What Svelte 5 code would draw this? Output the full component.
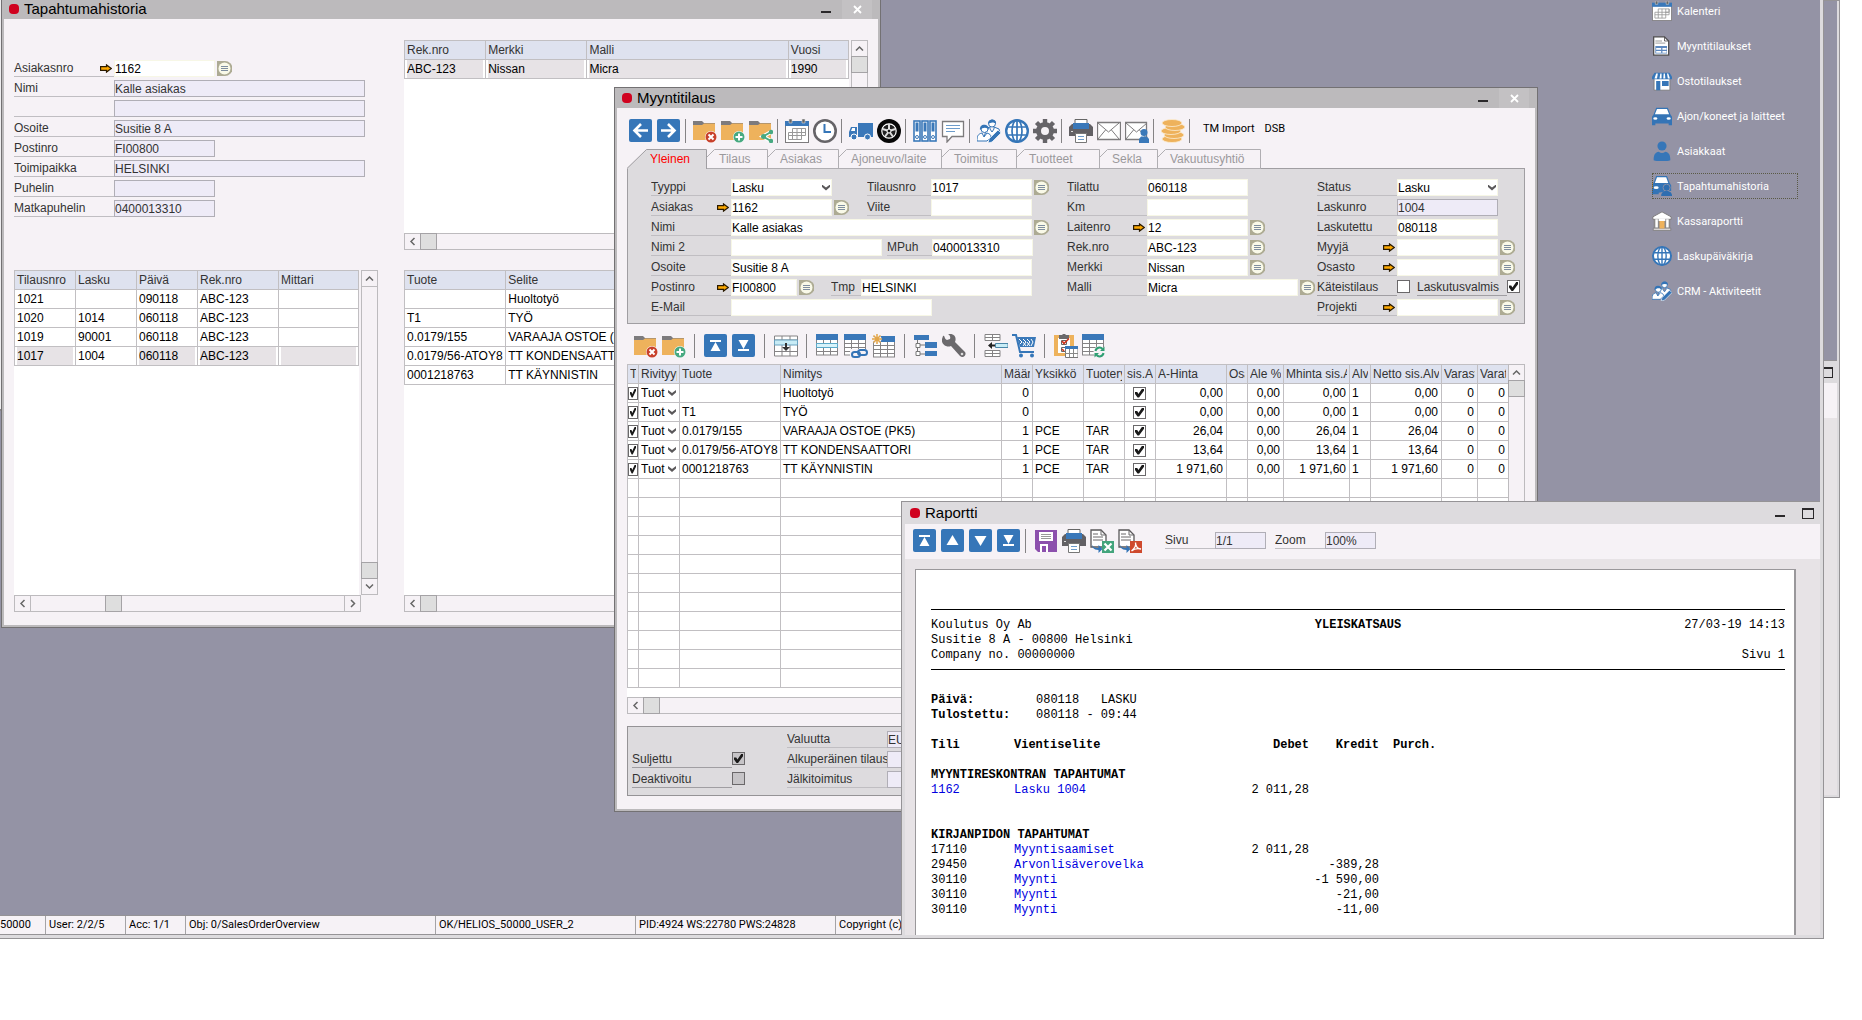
<script>
  const nav = [
    ['calendar', 'Kalenteri'],
    ['invoice', 'Myyntitilaukset'],
    ['shop', 'Ostotilaukset'],
    ['car', 'Ajon/koneet ja laitteet'],
    ['person', 'Asiakkaat'],
    ['carPerson', 'Tapahtumahistoria'],
    ['bank', 'Kassaraportti'],
    ['globe', 'Laskupäiväkirja'],
    ['crm', 'CRM - Aktiviteetit']
  ];

  const orderTools = [
    'left', 'right', '|', 'folderDel', 'folderAdd', 'folderShare', '|', 'calendar', 'clock', '|',
    'truck', 'wheel', '|', 'binders', 'chat', '|', 'crm', 'globe', 'gear', '|',
    'printer', 'mail', 'mailUser', '|', 'coins', '|'
  ];
  const rowTools = [
    'folderDel', 'folderAdd', '|', 'top', 'bottom', '|', 'insertRow', '|', 'grid', 'gridLink', 'gridNew', '|',
    'tree', 'wrench', '|', 'outdent', 'cart', '|', 'clipboard', 'gridSync'
  ];
  const reportTools = ['top', 'up', 'down', 'bottom', '|', 'save', 'printer', 'xls', 'pdf'];

  const tabs = [
    ['Tilaus', 61], ['Asiakas', 71], ['Ajoneuvo/laite', 103], ['Toimitus', 75],
    ['Tuotteet', 83], ['Sekla', 58], ['Vakuutusyhtiö', 103]
  ];

  const orders = [
    ['1021', '', '090118', 'ABC-123', ''],
    ['1020', '1014', '060118', 'ABC-123', ''],
    ['1019', '90001', '060118', 'ABC-123', ''],
    ['1017', '1004', '060118', 'ABC-123', '']
  ];
  const products = [
    ['', 'Huoltotyö'],
    ['T1', 'TYÖ'],
    ['0.0179/155', 'VARAAJA OSTOE (PK5)'],
    ['0.0179/56-ATOY8', 'TT KONDENSAATTORI'],
    ['0001218763', 'TT KÄYNNISTIN']
  ];

  const lineCols = [
    ['T', 11], ['Rivityyp', 41], ['Tuote', 101], ['Nimitys', 221], ['Määr', 31], ['Yksikkö', 51],
    ['Tuotery', 41], ['sis.A', 31], ['A-Hinta', 71], ['Osa', 21], ['Ale %', 36], ['Mhinta sis.A', 66],
    ['Alv', 21], ['Netto sis.Alv', 71], ['Varast', 36], ['Varat', 31]
  ];
  const lines = [
    ['', 'Huoltotyö', '0', '', '', '0,00'],
    ['T1', 'TYÖ', '0', '', '', '0,00'],
    ['0.0179/155', 'VARAAJA OSTOE (PK5)', '1', 'PCE', 'TAR', '26,04'],
    ['0.0179/56-ATOY8', 'TT KONDENSAATTORI', '1', 'PCE', 'TAR', '13,64'],
    ['0001218763', 'TT KÄYNNISTIN', '1', 'PCE', 'TAR', '1 971,60']
  ];

  const ledger = [
    ['17110', 'Myyntisaamiset', '2 011,28', ''],
    ['29450', 'Arvonlisäverovelka', '', '-389,28'],
    ['30110', 'Myynti', '', '-1 590,00'],
    ['30110', 'Myynti', '', '-21,00'],
    ['30110', 'Myynti', '', '-11,00']
  ];

  const status = [
    ['50000', 46], ['User: 2/2/5', 80], ['Acc: 1/1', 60], ['Obj: 0/SalesOrderOverview', 250],
    ['OK/HELIOS_50000_USER_2', 200], ['PID:4924 WS:22780 PWS:24828', 200], ['Copyright (c)', 200]
  ];
</script>

{#snippet folder()}
  <path d="M0 2h9l2 2h11v5H0z" fill="#7d7b7d" /><path d="M0 6h9l2-1.500h11V21H0z" fill="#eeb25c" />
{/snippet}

{#snippet gridLines(w)}
  <rect x=".5" y="1" width={w} height="20" fill="#fff" stroke="#858385" />
  <path d="M0 9.500h{w}M0 13.500h{w}M0 17.500h{w}M7.500 5v16M14.500 5v16" stroke="#858385" fill="none" />
  <rect width={w + 1} height="6" fill="#3a78b9" />
{/snippet}

{#snippet page()}
  <path d="M1 1h10l5 5v12H1z" fill="#fff" stroke="#5a585a" stroke-width="1.300" /><path d="M11 1v5h5M3 5h5M3 8h10M3 11h10" fill="none" stroke="#6a686a" />
  <path d="M1.500 13c0 5 3 6 7 6l0-3 4 4-4 4 0-3c-5 0-7-3-7-8z" fill="#3474b6" />
{/snippet}

{#snippet icon(name)}
  <svg viewBox="0 0 24 24" aria-hidden="true">
    {#if ['left', 'right', 'top', 'bottom', 'up', 'down'].includes(name)}
      <rect width="23" height="23" rx="2" fill="#3676b8" />
      {#if name === 'left'}<path d="M19 11.500H6M12 5l-6.500 6.500L12 18" fill="none" stroke="#fff" stroke-width="2.600" />
      {:else if name === 'right'}<path d="M4 11.500h13M11 5l6.500 6.500L11 18" fill="none" stroke="#fff" stroke-width="2.600" />
      {:else if name === 'top'}<path d="M6 6h11v2H6zM11.500 8l5 9h-10z" fill="#fff" />
      {:else if name === 'bottom'}<path d="M6 15h11v2H6zM11.500 15l-5-9h10z" fill="#fff" />
      {:else if name === 'up'}<path d="M11.500 6l6 10h-12z" fill="#fff" />
      {:else}<path d="M11.500 17l-6-10h12z" fill="#fff" />{/if}
    {:else if name === 'folderDel'}
      {@render folder()}<circle cx="18" cy="18" r="6" fill="#fff" /><circle cx="18" cy="18" r="5.500" fill="#c8402b" /><path d="M15.500 15.500l5 5m0-5l-5 5" stroke="#fff" stroke-width="2" />
    {:else if name === 'folderAdd'}
      {@render folder()}<circle cx="18" cy="18" r="6" fill="#fff" /><circle cx="18" cy="18" r="5.500" fill="#47a981" /><path d="M18 14.500v7M14.500 18h7" stroke="#fff" stroke-width="2" />
    {:else if name === 'folderShare'}
      {@render folder()}<path d="M22 13l-8 4.500 8 4.500" fill="none" stroke="#fff" stroke-width="4" /><path d="M22 13l-8 4.500 8 4.500" fill="none" stroke="#47a981" stroke-width="2" /><circle cx="22" cy="13" r="2.200" fill="#47a981" /><circle cx="14.500" cy="17.500" r="2.500" fill="#47a981" /><circle cx="22" cy="22" r="2.200" fill="#47a981" />
    {:else if name === 'calendar'}
      <rect x=".5" y="4" width="23" height="19.500" fill="#fff" stroke="#7d7b7d" /><path d="M0 2h24v5H0z" fill="#3a78b9" /><path d="M4 0h3v4H4zM17 0h3v4h-3z" fill="#666" stroke="#ddd" stroke-width=".6" />
      <path d="M7.500 9.500h13v4h-17v7h13v-11m4 0v7h-17m8.500-7v11m-4.500-11v11m8.500-7h4" fill="none" stroke="#999" />
    {:else if name === 'clock'}
      <circle cx="12" cy="12" r="10.700" fill="#fff" stroke="#666468" stroke-width="2.600" /><path d="M11.500 5v8H18" fill="none" stroke="#3676b8" stroke-width="2" />
    {:else if name === 'truck'}
      <path d="M9 4h15v14H9zM0 18v-5l2-5h6v10z" fill="#3a78b9" /><path d="M2 12l1.200-3H6v3z" fill="#fff" /><circle cx="5" cy="18" r="3" fill="#3a78b9" stroke="#fff" /><circle cx="18.500" cy="18" r="3" fill="#3a78b9" stroke="#fff" />
    {:else if name === 'wheel'}
      <circle cx="12" cy="12" r="12" fill="#070707" /><circle cx="12" cy="12" r="7.200" fill="#222" stroke="#fff" stroke-width="1.200" /><path d="M12 12V5M12 12l6.500-2M12 12l4 5.700M12 12l-4 5.700M12 12L5.500 10" stroke="#ddd" stroke-width="2" /><circle cx="12" cy="12" r="2" fill="#111" stroke="#fff" />
    {:else if name === 'binders'}
      {#each [1, 9, 17] as x}
        <rect {x} y="2" width="6" height="20" fill="#fff" stroke="#3a78b9" stroke-width="1.600" /><rect x={x + 1.500} y="3.500" width="3" height="9" fill="#3a78b9" /><circle cx={x + 3} cy="18" r="1.500" fill="none" stroke="#3a78b9" />
      {/each}
    {:else if name === 'chat'}
      <path d="M1.500 2.500h21v15H11l-5 5.500v-5.500H1.500z" fill="#fff" stroke="#7d7b7d" stroke-width="1.300" /><path d="M5 6.500h14M5 9.500h14M5 12.500h9" stroke="#6d9ccb" />
    {:else if name === 'crm'}
      <path d="M10 9l3-1v2l2 3 2-3v-2l5 2 1 4-8 8-8-4z" fill="#fff" stroke="#3474b6" /><circle cx="15" cy="4.500" r="3.500" fill="#fff" stroke="#3474b6" /><path d="M11 5c0-6 9-6 8 0-2-2-5-2-8 0z" fill="#3474b6" /><path d="M0 22c0-5 1-7 5-8l2 4 3-4c3 1 4 2 4 4l-4 4z" fill="#fff" stroke="#3474b6" /><circle cx="7.500" cy="10" r="3.500" fill="#fff" stroke="#3474b6" /><path d="M3 11c-1-7 9-7 9 0-2-3-6-3-9 0z" fill="#3474b6" /><path d="M21 11l3 3-9 9-4 1 1-4z" fill="#3474b6" stroke="#fff" stroke-width=".7" />
    {:else if name === 'globe'}
      <circle cx="12" cy="12" r="10.800" fill="#fff" stroke="#3676b8" stroke-width="2.400" /><ellipse cx="12" cy="12" rx="5" ry="11" fill="none" stroke="#3676b8" stroke-width="1.700" /><path d="M12 1v22M2 8h20M2 16h20" stroke="#3676b8" stroke-width="1.700" />
    {:else if name === 'gear'}
      <circle cx="12" cy="12" r="6.500" fill="none" stroke="#666468" stroke-width="5" /><path d="M12 0v5M12 19v5M0 12h5M19 12h5M3.500 3.500l4 4M16.500 16.500l4 4M3.500 20.500l4-4M16.500 7.500l4-4" stroke="#666468" stroke-width="4.400" />
    {:else if name === 'printer'}
      <path d="M0 8l3-3h18l3 3v9H0z" fill="#626064" /><path d="M6 .5h12V6H6z" fill="#fff" stroke="#666" /><path d="M4 4h16v6H4z" fill="#3a78b9" /><path d="M6.500 14.500h11v9h-11z" fill="#fff" stroke="#777" /><path d="M9 17.500h6M9 20.500h6" stroke="#6d9ccb" /><path d="M2 12h2v1H2z" fill="#ddd" />
    {:else if name === 'mail' || name === 'mailUser'}
      <path d={name === 'mail' ? 'M.5 3.500h23v17H.5z' : 'M.5 3.500h21v17H.5z'} fill="#fff" stroke="#7d7b7d" stroke-width="1.300" /><path d="M1 4l10.500 9L22 4M1 20l7.500-9M22 20l-7.500-9" fill="none" stroke="#7d7b7d" />
      {#if name === 'mailUser'}<circle cx="19" cy="13.500" r="3.500" fill="#3a78b9" /><path d="M14 24v-4l2-2.500h6l2 2.500v4z" fill="#3a78b9" />{/if}
    {:else if name === 'coins'}
      {#each [[11, 20], [13, 16], [10, 12], [14, 8], [11, 4]] as [x, y]}
        <ellipse cx={x} cy={y} rx="10" ry="3.500" fill="#eeb25c" stroke="#fbeed6" stroke-width=".8" />
      {/each}
    {:else if name === 'insertRow'}
      <path d="M.5 2h23v20H.5zM.5 6h23M.5 17.500h23M8 2v20M16 2v20" fill="#fff" stroke="#858385" /><path d="M.5 6h23v5H.5z" fill="#c8ecf6" stroke="#6aa2c0" /><path d="M11 9h2v4h3l-4 4-4-4h3z" fill="#333" />
    {:else if name === 'grid'}
      {@render gridLines(21)}<path d="M.5 9.500h21v4H.5z" fill="#d8f3fa" stroke="#5ba9c9" />
    {:else if name === 'gridLink'}
      {@render gridLines(21)}<path d="M6 15h18v9H6z" fill="#f6f2f6" /><rect x="8" y="18" width="8" height="5" rx="2.500" fill="none" stroke="#3474b6" stroke-width="2" /><rect x="14" y="16" width="9" height="5" rx="2.500" fill="none" stroke="#3474b6" stroke-width="2" />
    {:else if name === 'gridNew'}
      <g transform="translate(1 2)">{@render gridLines(21)}</g><circle cx="5" cy="5" r="4.500" fill="#f6f2f6" /><path d="M5 0v10M0 5h10M1.500 1.500l7 7m0-7l-7 7" stroke="#e2a548" stroke-width="1.500" />
    {:else if name === 'gridSync'}
      {@render gridLines(21)}<circle cx="17.500" cy="18" r="6" fill="#f6f2f6" /><path d="M13.500 17a4 4 0 0 1 7-2M21.500 19a4 4 0 0 1-7 2" fill="none" stroke="#2f9f73" stroke-width="2" /><path d="M22.500 12.500v4.500H18zM12.500 23.500V19H17z" fill="#2f9f73" />
    {:else if name === 'tree'}
      <path d="M0 1h15v5H0zM11 8h12v6H11zM11 17h12v5H11z" fill="#3a78b9" /><path d="M3.500 6v14H11M3.500 11H11" fill="none" stroke="#777" /><path d="M2 9.500h4v4H2zM2 17.500h4v4H2z" fill="#fff" stroke="#777" />
    {:else if name === 'wrench'}
      <path d="M1 2c2-1 1 3 4 4l3-1c1-3-1-4-2-5 6-1 9 3 7 8l10 10c2 3-2 7-5 4L9 12C4 14-1 10 0 5z" fill="#6b696c" /><circle cx="20" cy="20" r="1.300" fill="#ddd" />
    {:else if name === 'outdent'}
      <path d="M1 .5h15v6H1zM1 16.500h15v6H1zM1 3.500h15M1 19.500h15M8.500 0v6M8.500 16v6" fill="#fff" stroke="#858385" /><path d="M11.500 9.500H24v4H11.500z" fill="#c8ecf6" stroke="#4a86a8" /><path d="M4 11.500l4-3.500v2.500h3v2H8V15z" fill="#222" />
    {:else if name === 'cart'}
      <path d="M0 1h4l4 17h14" fill="none" stroke="#3676b8" stroke-width="2" /><path d="M5 3h19l-2 10H8z" fill="#3a78b9" /><path d="M7 5l3 3-2 2m3-5l3 3-3 4m0-4l3 4m1-7l3 3-3 4m0-4l3 4m1-7l2 3-2 4" fill="none" stroke="#fff" /><circle cx="9" cy="21.500" r="2" fill="#3676b8" /><circle cx="20" cy="21.500" r="2" fill="#3676b8" />
    {:else if name === 'clipboard'}
      <path d="M0 1h20v21H0z" fill="#eeb25c" /><path d="M4 4h12v15H4z" fill="#fff" /><path d="M5 1h3l2-2 2 2h3v4H5z" fill="#6b696c" /><path d="M7.500 6.500h5v4h-5zM7.500 13.500h5v4h-5z" fill="#fff" stroke="#666" /><path d="M8 7l2 2.500 5-5M8 15l2 2" fill="none" stroke="#d0361f" stroke-width="1.700" /><path d="M11.500 12.500H24v11H11.500z" fill="#fff" stroke="#777" /><path d="M11 12h13v3H11z" fill="#3a78b9" /><path d="M11 19.500h13M15.500 15v8M19.500 15v8" stroke="#888" />
    {:else if name === 'save'}
      <path d="M1 1h22v22H4l-3-3z" fill="#8c50ad" /><path d="M5 3h14v9H5z" fill="#fff" /><path d="M7 5.500h10M7 7.500h10M7 9.500h10" stroke="#999" /><path d="M6 15h12v8H6z" fill="#fff" /><path d="M8 17h4v6H8zM14 15h4v8h-4z" fill="#8c50ad" />
    {:else if name === 'xls'}
      {@render page()}<path d="M12 12h12v12H12z" fill="#43a47c" /><path d="M14.500 14.500l7 7m0-7l-7 7" stroke="#fff" stroke-width="2.200" />
    {:else if name === 'pdf'}
      {@render page()}<path d="M12 12h12v12H12z" fill="#cf4a2e" /><path d="M17.500 13.500c1 4-1 6-4 8.500 3-2.500 5-3 9.500-2-3 0-5-2-5.500-6" fill="none" stroke="#fff" stroke-width="1.300" />
    {:else if name === 'invoice'}
      <path d="M2 1h13l5 5v17H2z" fill="#fff" stroke="#4e4c4e" stroke-width="1.500" /><path d="M15 1v5h5" fill="none" stroke="#4e4c4e" /><path d="M4 6h8M4 8.500h12" stroke="#888" /><path d="M4 12h14v9H4z" fill="#5c88bf" /><path d="M5 14.500h6v2H5zM12.500 14.500h5v2h-5zM5 18h6v2H5zM12.500 18h5v2h-5z" fill="#fff" />
    {:else if name === 'shop'}
      <path d="M2.500 9h19v14h-19z" fill="#fff" stroke="#777" /><path d="M3 2h18l3 5v3H0V7z" fill="#3676b8" /><path d="M5 3h2L6 9H3zM10 3h1.500v6H9zM14 3h1.500l.5 6h-2.500zM18 3h1.500l2 6H19z" fill="#fff" /><path d="M5 12h5v11H5zM12 12h8v6h-8z" fill="#3676b8" />
    {:else if name === 'car'}
      <path d="M5 2h14l3 8 2 3v10h-4v-2H4v2H0V13l2-3z" fill="#3474b6" /><path d="M6 3.500h12l2.500 6.500h-17z" fill="#fff" /><ellipse cx="4" cy="15" rx="2.500" ry="1.500" fill="#fff" /><ellipse cx="20" cy="15" rx="2.500" ry="1.500" fill="#fff" />
    {:else if name === 'person'}
      <circle cx="12" cy="6" r="5.500" fill="#3676b8" /><path d="M2 23c0-7 2-9 6-10 3 2 5 2 8 0 4 1 6 3 6 10-5 2-15 2-20 0z" fill="#3676b8" />
    {:else if name === 'carPerson'}
      <path d="M5 0h13l3 8 2 3v7h-4L8 20v2H0V10l2-2z" fill="#3474b6" /><path d="M6 1.500h11l2.500 7h-16z" fill="#fff" /><ellipse cx="5" cy="14" rx="3" ry="1.600" fill="#fff" /><path d="M0 7h1v8H0z" fill="#c9822e" /><circle cx="17.500" cy="14" r="4.200" fill="#2f6eb0" stroke="#9493a5" /><path d="M11 24c0-4 2-5 5-6h3c3 1 5 2 5 6z" fill="#2f6eb0" />
    {:else if name === 'bank'}
      <path d="M12 1L1 7v3h22V7z" fill="#fff" stroke="#7d7b7d" stroke-width="1.200" /><path d="M2 10h20v10H2z" fill="#8b898b" /><path d="M4 10h3v10H4zM17 10h3v10h-3zM8 9h8v3H8z" fill="#fff" /><path d="M1.500 20.500h21v3h-21z" fill="#d8d4d4" stroke="#7d7b7d" /><path d="M9 12h6v9H9z" fill="#eeb25c" />
    {/if}
  </svg>
{/snippet}

{#snippet tools(list)}
  {#each list as t}
    {#if t === '|'}<span class="sep"></span>{:else}<button class="tool" aria-label={t}>{@render icon(t)}</button>{/if}
  {/each}
{/snippet}

{#snippet titlebar(text, kind)}
  <header class="title {kind}">
    <span class="dot"></span><h2>{text}</h2>
    <button class="min" aria-label="Pienennä"></button>
    {#if kind === 'max'}<button class="maxi" aria-label="Suurenna"></button>
    {:else}<button class="close" aria-label="Sulje"><svg viewBox="0 0 9 9"><path d="M1 1l7 7m0-7L1 8" stroke="#fff" stroke-width="1.800" /></svg></button>{/if}
  </header>
{/snippet}

{#snippet field(id, label, cls, value = '', o = {})}
  <div class="field {cls}">
    <label for={id}><span>{label}</span>
      {#if o.arrow}<svg class="arrow" viewBox="0 0 12 9"><path d="M.6 2.600h5.900V.9L11.300 4.500 6.500 8.100V6.400H.6z" fill="#fca800" stroke="#2a1a00" stroke-width="1.200" /></svg>{/if}
    </label>
    {#if o.select}<span class="sel"><select {id}><option>{value}</option></select></span>
    {:else if o.check !== undefined}<input {id} type="checkbox" checked={o.check} disabled={o.dim} />
    {:else}<input {id} type="text" {value} readonly={o.ro} />{/if}
    {#if o.lens}
      <button class="lens" aria-label="Hae {label}"><svg viewBox="0 0 15 15"><path d="M0 0h8a7.500 7.500 0 0 1 0 15H0z" fill="#adab93" /><circle cx="7.500" cy="7.500" r="6" fill="#f9f9e8" /><path d="M4 5.500h7M4 7.500h7M4 9.500h7" stroke="#7f8ea0" /></svg></button>
    {/if}
  </div>
{/snippet}

{#snippet bar(dir, before, after)}
  <div class="bar {dir}">
    <button aria-label="Takaisin"><svg viewBox="0 0 9 9"><path d={dir === 'v' ? 'M1 6.500L4.500 3 8 6.500' : 'M6.500 1L3 4.500 6.500 8'} /></svg></button>
    <span style:flex-grow={before}></span><i></i><span style:flex-grow={after}></span>
    <button aria-label="Eteenpäin"><svg viewBox="0 0 9 9"><path d={dir === 'v' ? 'M1 2.500L4.500 6 8 2.500' : 'M3 1l3.500 3.500L3 8'} /></svg></button>
  </div>
{/snippet}

<main class="screen">
  <div class="back">
    <div class="back-top"></div>
    <div class="back-title"><button class="maxi" aria-label="Suurenna"></button></div>
    <div class="back-tools"></div>
  </div>

  <div class="app">
    <div class="work">
      <nav>
        {#each nav as [ic, text]}
          <a href="#{ic}" class:current={ic === 'carPerson'}>{@render icon(ic)}<span>{text}</span></a>
        {/each}
      </nav>
    </div>
    <footer class="status">
      {#each status as [text, w]}<span style:width="{w}px">{text}</span>{/each}
    </footer>
    <div class="edge"></div>

    <section class="win history">
      {@render titlebar('Tapahtumahistoria', 'shut')}
      <div class="history-body">
        <div class="person">
          {@render field('h1', 'Asiakasnro', 'l100 w101', '1162', { arrow: true, lens: true })}
          {@render field('h2', 'Nimi', 'l100 w251', 'Kalle asiakas', { ro: true })}
          {@render field('h3', '', 'l100 w251', '', { ro: true })}
          {@render field('h4', 'Osoite', 'l100 w251', 'Susitie 8 A', { ro: true })}
          {@render field('h5', 'Postinro', 'l100 w101', 'FI00800', { ro: true })}
          {@render field('h6', 'Toimipaikka', 'l100 w251', 'HELSINKI', { ro: true })}
          {@render field('h7', 'Puhelin', 'l100 w101', '', { ro: true })}
          {@render field('h8', 'Matkapuhelin', 'l100 w101', '0400013310', { ro: true })}
        </div>

        <div class="list">
          <div class="sheet">
            <table>
              <colgroup><col class="c81" /><col class="c101" /><col class="c201" /><col class="c61" /></colgroup>
              <thead><tr><th>Rek.nro</th><th>Merkki</th><th>Malli</th><th>Vuosi</th></tr></thead>
              <tbody><tr class="picked"><td>ABC-123</td><td>Nissan</td><td>Micra</td><td>1990</td></tr></tbody>
            </table>
          </div>
          {@render bar('v', 0, 1)}
          {@render bar('h', 0, 1)}
        </div>

        <div class="list">
          <div class="sheet">
            <table>
              <colgroup><col class="c61" /><col class="c61" /><col class="c61" /><col class="c81" /><col class="c81" /></colgroup>
              <thead><tr><th>Tilausnro</th><th>Lasku</th><th>Päivä</th><th>Rek.nro</th><th>Mittari</th></tr></thead>
              <tbody>
                {#each orders as row}
                  <tr class:picked={row[0] === '1017'}>
                    {#each row as cell, i}<td class:focus={i === 1}>{cell}</td>{/each}
                  </tr>
                {/each}
              </tbody>
            </table>
          </div>
          {@render bar('v', 1, 0)}
          {@render bar('h', 1, 3)}
        </div>

        <div class="list">
          <div class="sheet">
            <table>
              <colgroup><col class="c101" /><col class="c343" /></colgroup>
              <thead><tr><th>Tuote</th><th>Selite</th></tr></thead>
              <tbody>
                {#each products as row}<tr>{#each row as cell}<td>{cell}</td>{/each}</tr>{/each}
              </tbody>
            </table>
          </div>
          {@render bar('v', 0, 1)}
          {@render bar('h', 0, 1)}
        </div>
      </div>
    </section>

    <section class="win order">
      {@render titlebar('Myyntitilaus', 'shut')}
      <div class="order-body">
        <div class="toolbar main-tools">
          {@render tools(orderTools)}
          <button class="word">TM Import</button><button class="word">DSB</button>
        </div>

        <div class="tabs">
          <button class="tab on"><svg viewBox="0 0 80 20"><path d="M0 20L.5 18.500 19.500.5H79.500V20z" fill="#dddbde" /><path d="M0 19.500L19.500.5H79.500V20" fill="none" stroke="#a09ea2" /></svg><span>Yleinen</span></button>
          {#each tabs as [text, w]}
            <button class="tab" style:width="{w}px"><svg viewBox="0 0 {w} 20"><path d="M0 8L7.500.5H{w - 0.5}V20M0 19.500H{w}" fill="none" stroke="#b0aeb2" /></svg><span>{text}</span></button>
          {/each}
        </div>

        <div class="form">
          <div class="block wide">
            <div class="line">
              {@render field('o1', 'Tyyppi', 'l80 w101 s216', 'Lasku', { select: true })}
              {@render field('o2', 'Tilausnro', 'l64 w101', '1017', { lens: true })}
            </div>
            <div class="line">
              {@render field('o3', 'Asiakas', 'l80 w101 s216', '1162', { arrow: true, lens: true })}
              {@render field('o4', 'Viite', 'l64 w101')}
            </div>
            {@render field('o5', 'Nimi', 'l80 w301', 'Kalle asiakas', { lens: true })}
            <div class="line">
              {@render field('o6', 'Nimi 2', 'l80 w151 s236')}
              {@render field('o7', 'MPuh', 'l45 w101', '0400013310')}
            </div>
            {@render field('o8', 'Osoite', 'l80 w301', 'Susitie 8 A')}
            <div class="line">
              {@render field('o9', 'Postinro', 'l80 w66 s180', 'FI00800', { arrow: true, lens: true })}
              {@render field('o10', 'Tmp', 'l30 w171', 'HELSINKI')}
            </div>
            {@render field('o11', 'E-Mail', 'l80 w201')}
          </div>
          <div class="block mid">
            {@render field('o12', 'Tilattu', 'l80 w101', '060118')}
            {@render field('o13', 'Km', 'l80 w101')}
            {@render field('o14', 'Laitenro', 'l80 w101', '12', { arrow: true, lens: true })}
            {@render field('o15', 'Rek.nro', 'l80 w101', 'ABC-123', { lens: true })}
            {@render field('o16', 'Merkki', 'l80 w101', 'Nissan', { lens: true })}
            {@render field('o17', 'Malli', 'l80 w151', 'Micra', { lens: true })}
          </div>
          <div class="block">
            {@render field('o18', 'Status', 'l80 w101', 'Lasku', { select: true })}
            {@render field('o19', 'Laskunro', 'l80 w101', '1004', { ro: true })}
            {@render field('o20', 'Laskutettu', 'l80 w101', '080118')}
            {@render field('o21', 'Myyjä', 'l80 w101', '', { arrow: true, lens: true })}
            {@render field('o22', 'Osasto', 'l80 w101', '', { arrow: true, lens: true })}
            <div class="line">
              {@render field('o23', 'Käteistilaus', 'l80 s100 dark', '', { check: false })}
              {@render field('o24', 'Laskutusvalmis', 'l90 dark', '', { check: true })}
            </div>
            {@render field('o25', 'Projekti', 'l80 w101', '', { arrow: true, lens: true })}
          </div>
        </div>

        <div class="toolbar row-tools">{@render tools(rowTools)}</div>

        <div class="list lines">
          <div class="sheet">
            <table>
              <colgroup>{#each lineCols as [, w]}<col style:width="{w}px" />{/each}</colgroup>
              <thead><tr>{#each lineCols as [h]}<th><div>{h}</div></th>{/each}</tr></thead>
              <tbody>
                {#each lines as [code, name, qty, unit, group, price]}
                  <tr>
                    <td class="tick"><input type="checkbox" checked aria-label="T" /></td>
                    <td><span class="sel small"><select aria-label="Rivityyppi"><option>Tuot</option></select></span></td>
                    <td>{code}</td><td>{name}</td><td class="num">{qty}</td><td>{unit}</td><td>{group}</td>
                    <td class="mid-tick"><input type="checkbox" checked aria-label="sis.Alv" /></td>
                    <td class="num">{price}</td><td></td><td class="num">0,00</td><td class="num">{price}</td>
                    <td>1</td><td class="num">{price}</td><td class="num">0</td><td class="num">0</td>
                  </tr>
                {/each}
                {#each Array(11) as _}<tr>{#each lineCols as _c}<td></td>{/each}</tr>{/each}
              </tbody>
            </table>
          </div>
          {@render bar('v', 0, 1)}
          {@render bar('h', 0, 1)}
        </div>

        <div class="totals">
          <div class="closed">
            {@render field('t1', 'Suljettu', 'l100 dark', '', { check: true, dim: true })}
            {@render field('t2', 'Deaktivoitu', 'l100 dark', '', { check: false, dim: true })}
          </div>
          <div>
            {@render field('t3', 'Valuutta', 'l100 w66', 'EUR', { ro: true })}
            {@render field('t4', 'Alkuperäinen tilaus', 'l100 w66', '', { ro: true })}
            {@render field('t5', 'Jälkitoimitus', 'l100 w66', '', { ro: true })}
          </div>
        </div>
      </div>
    </section>

    <section class="report">
      {@render titlebar('Raportti', 'max')}
      <div class="toolbar report-tools">
        {@render tools(reportTools)}
        <div class="line pager">
          {@render field('r1', 'Sivu', 'l50 w51 s110', '1/1', { ro: true })}
          {@render field('r2', 'Zoom', 'l50 w51', '100%', { ro: true })}
        </div>
      </div>
      <div class="desk">
        <article class="paper">
          <div class="letterhead">
            <div>Koulutus Oy Ab<br />Susitie 8 A - 00800 Helsinki<br />Company no. 00000000</div>
            <h3>YLEISKATSAUS</h3>
            <div class="right">27/03-19 14:13<br /><br />Sivu 1</div>
          </div>
          <dl>
            <dt>Päivä:</dt><dd>080118&nbsp;&nbsp; LASKU</dd>
            <dt>Tulostettu:</dt><dd>080118 - 09:44</dd>
          </dl>
          <table class="ledger">
            <colgroup><col class="acc" /><col class="desc" /><col class="deb" /><col class="cred" /><col /></colgroup>
            <thead><tr><th>Tili</th><th>Vientiselite</th><th class="r">Debet</th><th class="r">Kredit</th><th class="purch">Purch.</th></tr></thead>
            <tbody>
              <tr class="gap"><td colspan="5"></td></tr>
              <tr><th colspan="5">MYYNTIRESKONTRAN TAPAHTUMAT</th></tr>
              <tr><td><a href="#1162">1162</a></td><td><a href="#1004">Lasku 1004</a></td><td class="r">2 011,28</td><td></td><td></td></tr>
              <tr class="gap"><td colspan="5"></td></tr>
              <tr class="gap"><td colspan="5"></td></tr>
              <tr><th colspan="5">KIRJANPIDON TAPAHTUMAT</th></tr>
              {#each ledger as [acc, desc, deb, cred]}
                <tr><td>{acc}</td><td><a href="#{acc}">{desc}</a></td><td class="r">{deb}</td><td class="r">{cred}</td><td></td></tr>
              {/each}
            </tbody>
          </table>
        </article>
      </div>
    </section>
  </div>
</main>

<style>
  :global(body) { margin: 0; background: #fff; }
  .screen { position: relative; height: 100vh; overflow: hidden; font: 12px/16px "Liberation Sans", Arial, sans-serif; color: #000; }
  .screen :global(*) { box-sizing: border-box; }
  button { padding: 0; border: 0; background: none; font: inherit; color: inherit; }
  svg { display: block; }
  h2, h3, dl, dd { margin: 0; font: inherit; }

  /* application frame */
  .back { position: absolute; top: 0; right: 22px; bottom: 222px; width: 40px; display: flex; flex-direction: column; background: #e7e3e6; border: solid #dddbde; border-width: 0 3px 3px 0; outline: 1px solid #959396; outline-offset: -1px; }
  .back-top { height: 361px; background: #9493a5; border-bottom: 1px solid #959396; }
  .back-title { height: 22px; padding: 6px 6px 0 0; display: flex; justify-content: flex-end; background: #dddbde; }
  .back-tools { height: 35px; background: #f6f2f6; }
  .app { position: absolute; inset: 0 38px 81px 0; display: flex; flex-direction: column; background: #9493a5; border: solid #959396; border-width: 0 1px 1px 0; box-shadow: inset -3px -3px #dddbde; padding: 0 3px 3px 0; }
  .edge { position: absolute; left: 0; top: 0; width: 1px; height: 411px; background: #efeef0; border-bottom: 2px solid #8a888b; }
  .work { flex: 1; display: flex; justify-content: flex-end; min-height: 0; }
  nav { width: 146px; margin: -2px 22px 0 0; display: flex; flex-direction: column; gap: 9px; }
  nav a { height: 26px; display: flex; align-items: center; gap: 5px; white-space: nowrap; color: #fff; text-decoration: none; font: 11px/16px Roboto, sans-serif; }
  nav a span { padding-top: 2px; }
  nav a.current { outline: 1px dotted #5a5a45; outline-offset: -1px; }
  nav svg { width: 20px; height: 20px; flex: none; }
  .status { display: flex; height: 20px; overflow: hidden; border: solid #959396; border-width: 1px 0; background: #f6f2f6; font: 11px/18px Roboto, sans-serif; white-space: nowrap; }
  .status span { flex: none; padding-left: 3px; border-right: 1px solid #a5a3a6; }
  .status span:first-child { padding-left: 0; }
  .status span:last-child { flex: 1; }

  /* windows */
  .win { position: absolute; isolation: isolate; display: flex; flex-direction: column; background: #f6f2f6; border: 1px solid #737173; box-shadow: inset 0 0 0 2px #bcbabc; padding: 0 2px 2px; }
  .history { left: 1px; top: -2px; width: 880px; height: 630px; }
  .order { left: 614px; top: 87px; width: 924px; height: 725px; }
  .title { display: flex; align-items: center; height: 20px; padding: 0 6px 0 5px; background: #bcbabc; flex: none; }
  .title h2 { margin-left: 5px; flex: 1; font-size: 15px; line-height: 18px; }
  .title.max { height: 22px; padding-right: 0; background: #dddbde; }
  .dot { width: 10px; height: 10px; border-radius: 4px; background: #d0021f; }
  .min { width: 28px; height: 20px; margin-right: 2px; }
  .min::before { content: ""; display: block; width: 10px; height: 2px; margin: 6px auto 0; background: #2a282a; }
  .close { width: 30px; height: 20px; background: #c3c1c3; }
  .close svg { width: 9px; height: 9px; margin: 0 auto; }
  .maxi { width: 24px; height: 20px; }
  .maxi::before { content: ""; display: block; width: 10px; height: 8px; margin: 0 auto; border: 1px solid #2a282a; border-top-width: 2px; }
  .back-title .maxi { width: 10px; height: 8px; }

  .history-body { flex: 1; display: grid; grid-template: 210px 342px / 364px 464px; gap: 20px 26px; padding: 21px 10px 12px; }
  .person { padding-top: 20px; }
  .list { display: grid; grid-template: 1fr 17px / 1fr 17px; min-height: 0; }
  .sheet { background: #fff; overflow: hidden; }
  .history-body .sheet { margin-right: 2px; }

  /* tables */
  table { table-layout: fixed; border-spacing: 0; width: 1px; min-width: 100%; }
  .c61 { width: 61px; } .c81 { width: 81px; } .c101 { width: 101px; } .c201 { width: 201px; } .c343 { width: 343px; }
  .list th, .list td { height: 19px; padding: 0 2px; border: solid #c1bfc2; border-width: 0 0 1px 1px; font-weight: 400; text-align: left; white-space: nowrap; overflow: hidden; line-height: 18px; }
  .list th { height: 20px; border-top-width: 1px; background: #dee2ef; color: #333; }
  .list th div { overflow: hidden; }
  .history .list th:last-child, .history .list td:last-child { border-right-width: 1px; }
  .picked td { background: #e7e3e6 content-box; }
  .picked td.focus { background: none; }
  .list .num { text-align: right; padding-right: 3px; }
  .list .tick { padding: 0; }
  .list .tick input { width: 10px; }
  .list .mid-tick { padding-right: 3px; }
  .mid-tick input { margin: 0 auto; }

  .bar { display: flex; border: 1px solid #bdbbbe; background: #f6f2f6; }
  .bar.v { flex-direction: column; }
  .bar button { flex: none; width: 15px; height: 15px; display: grid; place-items: center; outline: 1px solid #bdbbbe; }
  .bar svg { width: 9px; height: 9px; fill: none; stroke: #666; stroke-width: 1.5; }
  .bar span { flex: 0 1 0; }
  .bar i { flex: none; width: 17px; height: 17px; margin: -1px 0; border: 1px solid #a5a3a6; background: #dedede; z-index: 1; }
  .bar.v i { margin: 0 -1px; }

  /* fields */
  .field, .line { display: flex; height: 20px; align-items: flex-start; }
  .field { flex: none; }
  label { flex: none; display: flex; align-items: center; height: 17px; border-bottom: 1px solid #c0bec2; color: #333; white-space: nowrap; overflow: hidden; }
  label span { flex: 1; }
  .dark label { border-color: #a09ea2; }
  .arrow { width: 12px; height: 9px; margin-right: 2px; }
  input, select { appearance: none; margin: 0; border-radius: 0; font: inherit; color: #000; }
  input[type="text"], select { height: 17px; padding: 0; border: 1px solid #f7f7e6; background: #fff; outline: 0; }
  input[readonly] { border-color: #b0aeb6; background: #eeebf7; color: #333; }
  input[type="text"] { width: 100%; }
  .l30 label { width: 30px; } .l45 label { width: 45px; } .l50 label { width: 50px; } .l64 label { width: 64px; }
  .l80 label { width: 80px; } .l90 label { width: 90px; } .l100 label { width: 100px; }
  .w51 input { width: 51px; } .w66 input { width: 66px; } .w101 input, .w101 select { width: 101px; } .w151 input { width: 151px; }
  .w171 input { width: 171px; } .w201 input { width: 201px; } .w251 input { width: 251px; } .w301 input { width: 301px; }
  .s100 { width: 100px; } .s110 { width: 110px; } .s180 { width: 180px; } .s216 { width: 216px; } .s236 { width: 236px; }
  .sel { display: grid; align-items: center; }
  .sel select, .sel::after { grid-area: 1 / 1; }
  .sel::after { content: ""; width: 8px; height: 6px; margin-right: 2px; justify-self: end; background: #5a585a; clip-path: polygon(0 0, 50% 50%, 100% 0, 100% 40%, 50% 100%, 0 40%); pointer-events: none; }
  .small select { width: 100%; height: 18px; border: 0; background: none; }
  .small::after { width: 8px; margin-right: 1px; }
  input[type="checkbox"] { display: block; width: 13px; height: 13px; margin-top: 1px; border: 1px solid #6a686a; background: #fff; }
  .list input[type="checkbox"] { margin-top: 0; }
  input[type="checkbox"]:disabled { background: #c6c4c7; }
  input[type="checkbox"]:checked::before { content: ""; display: block; height: 9px; margin: 1px; background: #1a1a1a; clip-path: polygon(0 38%, 25% 38%, 38% 60%, 80% 0, 100% 0, 100% 25%, 45% 100%, 28% 100%, 0 60%); }
  .lens { width: 15px; height: 15px; margin: 1px 0 0 2px; flex: none; }

  /* order window */
  .order-body { padding: 11px 10px 13px; display: flex; flex-direction: column; }
  .toolbar { display: flex; gap: 4px; height: 24px; flex: none; }
  .tool { width: 24px; height: 24px; flex: none; }
  .sep { width: 4px; border-left: 1px solid #858385; }
  .main-tools { padding-left: 2px; }
  .word { height: 20px; margin-left: 6px; font: 11px/20px Roboto, sans-serif; }
  .tabs { display: flex; height: 20px; margin-top: 6px; z-index: 1; }
  .tab { display: grid; flex: none; height: 20px; color: #9b999c; text-align: left; }
  .tab svg, .tab span { grid-area: 1 / 1; }
  .tab svg { width: 100%; height: 20px; }
  .tab span { padding: 2px 0 0 12px; }
  .tab.on { width: 80px; color: #f00; }
  .tab.on span { padding-left: 23px; }
  .form { display: flex; margin-top: -1px; padding: 10px 0 4px 23px; border: 1px solid #a09ea2; background: #dddbde; }
  .wide { width: 416px; } .mid { width: 250px; }
  .row-tools { margin-top: 10px; padding-left: 7px; }
  .row-tools .sep { width: 6px; margin-left: 4px; }
  .lines { height: 350px; margin-top: 6px; flex: none; }
  .totals { display: flex; margin-top: 12px; height: 70px; padding: 4px; border: 1px solid #959396; background: #dddbde; }
  .closed { width: 155px; padding-top: 20px; }

  /* report window */
  .report { position: absolute; left: 901px; top: 501px; right: 3px; bottom: 3px; display: flex; flex-direction: column; background: #f6f2f6; border: solid #959396; border-width: 1px 0 0 1px; padding-left: 3px; box-shadow: inset 3px 0 #dddbde; overflow: hidden; }
  .report-tools { height: 35px; padding: 5px 0 0 8px; }
  .report-tools .sep { width: 5px; height: 24px; }
  .pager { margin: 3px 0 0 19px; }
  .desk { flex: 1; display: flex; min-height: 0; padding: 10px 24px 0 10px; background: #e7e3e6; }
  .paper { flex: 1; padding: 39px 9px 0 15px; border: solid #9a989b; border-width: 1px 2px 0 1px; background: #fff; font: 12px/15px "Liberation Mono", monospace; overflow: hidden; }
  .letterhead { display: grid; grid-template-columns: 1fr auto 1fr; height: 61px; padding-top: 8px; border: solid #000; border-width: 1px 0; }
  .paper h3, .paper dt, .paper th { font-weight: 700; }
  .right { text-align: right; }
  dl { display: grid; grid-template-columns: 105px 1fr; margin: 23px 0 15px; }
  .ledger { width: 100%; }
  .ledger th, .ledger td { height: 15px; padding: 0; text-align: left; white-space: nowrap; }
  .ledger .r { text-align: right; }
  .ledger .purch { padding-left: 14px; }
  .acc { width: 83px; } .desc { width: 195px; } .deb { width: 100px; } .cred { width: 70px; }
  .paper a { color: #0000e0; text-decoration: none; }
</style>
